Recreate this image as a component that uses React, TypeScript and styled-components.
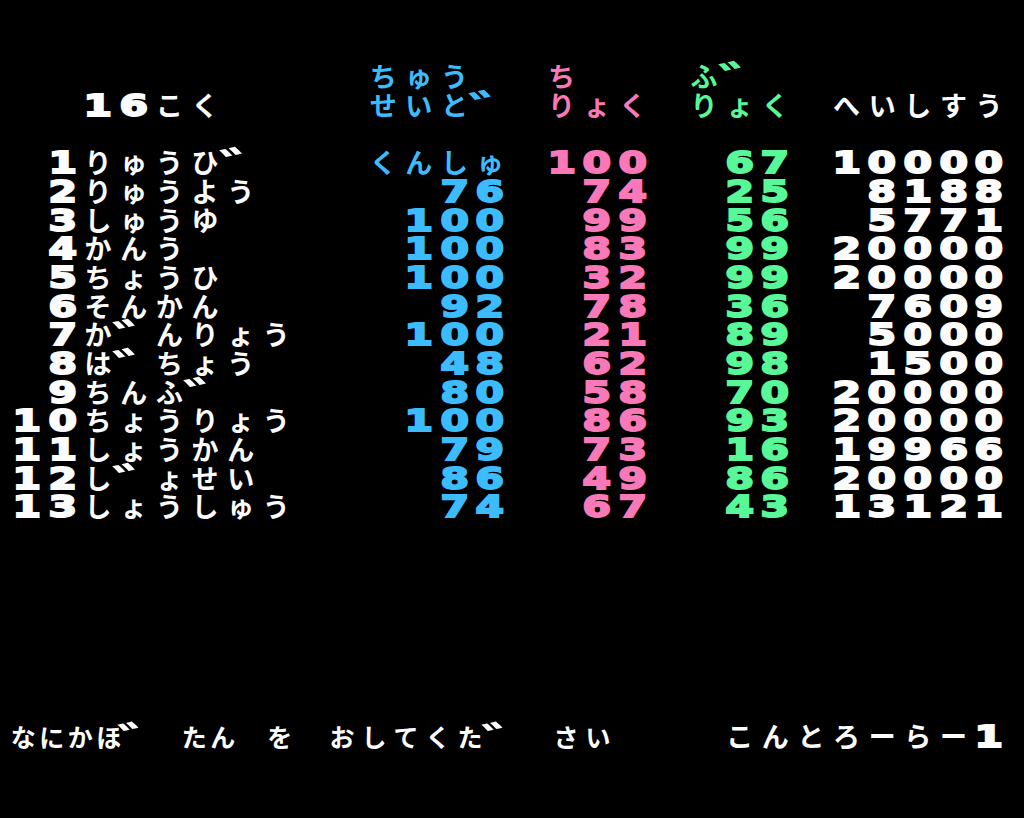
import React from 'react';
import styled, { createGlobalStyle } from 'styled-components';

const CELL = 35.65;
const ROW = 28.67;

const COLORS = {
  white: '#fcfcfc',
  blue: '#3cbcfc',
  pink: '#f878b8',
  green: '#58f898',
};
type Tone = keyof typeof COLORS;

const GlobalStyle = createGlobalStyle`
  html, body { margin: 0; padding: 0; background: #000; }
  #root { width: 1024px; height: 818px; }
`;

const Screen = styled.main`
  width: 1024px;
  height: 818px;
  box-sizing: border-box;
  background: #000;
  padding: 62px 0 0 9px;
  overflow: hidden;
  display: flex;
  flex-direction: column;
`;

const Line = styled.div<{ $gap?: number }>`
  display: grid;
  grid-template-columns: repeat(28, ${CELL}px);
  grid-template-rows: ${ROW}px;
  height: ${ROW}px;
  margin-top: ${(p) => (p.$gap ?? 0) * ROW}px;
  align-items: stretch;
`;

const Segment = styled.span<{ $start: number; $span: number; $tone: Tone }>`
  grid-column: ${(p) => p.$start + 1} / span ${(p) => p.$span};
  grid-row: 1;
  display: flex;
  min-width: 0;
  color: ${(p) => COLORS[p.$tone]};
`;

const Run = styled.span<{ $offset?: number }>`
  display: flex;
  flex: none;
  margin-left: ${(p) => p.$offset ?? 0}px;
`;

const Cell = styled.span<{ $w?: number }>`
  flex: 0 0 ${(p) => p.$w ?? CELL}px;
  width: ${(p) => p.$w ?? CELL}px;
  min-width: 0;
  display: flex;
  align-items: center;
  justify-content: center;
  overflow: visible;
`;

const Digit = styled.span`
  font-family: "DejaVu Sans", sans-serif;
  font-weight: 700;
  font-size: 31px;
  line-height: 22px;
  height: 22px;
  flex: none;
  display: inline-block;
  transform: scaleX(1.32);
  -webkit-text-stroke: 2px currentColor;
`;

const Kana = styled.span<{ $size?: number }>`
  font-family: "Noto Sans CJK JP", "Noto Sans", sans-serif;
  font-weight: 700;
  font-size: ${(p) => p.$size ?? 27}px;
  line-height: 22px;
  height: 22px;
  flex: none;
  display: inline-block;
`;

const Dakuten = styled.span<{ $size?: number }>`
  font-family: "Noto Sans CJK JP", "Noto Sans", sans-serif;
  font-weight: 700;
  font-size: ${(p) => ((p.$size ?? 27) * 40) / 27}px;
  line-height: 22px;
  height: 22px;
  flex: none;
  display: inline-block;
  transform-origin: left center;
  transform: translate(-0.06em, 0.06em) scaleX(1.8);
`;

function Glyph({ ch, size }: { ch: string; size?: number }) {
  if (ch === ' ' || ch === '　') return null;
  if (/[0-9]/.test(ch)) return <Digit>{ch}</Digit>;
  if (ch === '゛') return <Dakuten $size={size}>{ch}</Dakuten>;
  return <Kana $size={size}>{ch}</Kana>;
}

function Cells({ text, w, size }: { text: string; w?: number; size?: number }) {
  return (
    <>
      {Array.from(text).map((ch, i) => (
        <Cell key={i} $w={w}>
          <Glyph ch={ch} size={size} />
        </Cell>
      ))}
    </>
  );
}

function Text({
  text,
  tone,
  start,
  end,
}: {
  text: string;
  tone: Tone;
  start?: number;
  end?: number;
}) {
  const len = Array.from(text).length;
  const s = start ?? (end as number) - len + 1;
  return (
    <Segment $start={s} $span={len} $tone={tone}>
      <Cells text={text} />
    </Segment>
  );
}

type Officer = {
  no: string;
  name: string;
  loyal: string;
  intel: string;
  war: string;
  troops: string;
};

const officers: Officer[] = [
  { no: '1', name: 'りゅうひ゛', loyal: 'くんしゅ', intel: '100', war: '67', troops: '10000' },
  { no: '2', name: 'りゅうよう', loyal: '76', intel: '74', war: '25', troops: '8188' },
  { no: '3', name: 'しゅうゆ', loyal: '100', intel: '99', war: '56', troops: '5771' },
  { no: '4', name: 'かんう', loyal: '100', intel: '83', war: '99', troops: '20000' },
  { no: '5', name: 'ちょうひ', loyal: '100', intel: '32', war: '99', troops: '20000' },
  { no: '6', name: 'そんかん', loyal: '92', intel: '78', war: '36', troops: '7609' },
  { no: '7', name: 'か゛んりょう', loyal: '100', intel: '21', war: '89', troops: '5000' },
  { no: '8', name: 'は゛ちょう', loyal: '48', intel: '62', war: '98', troops: '1500' },
  { no: '9', name: 'ちんふ゛', loyal: '80', intel: '58', war: '70', troops: '20000' },
  { no: '10', name: 'ちょうりょう', loyal: '100', intel: '86', war: '93', troops: '20000' },
  { no: '11', name: 'しょうかん', loyal: '79', intel: '73', war: '16', troops: '19966' },
  { no: '12', name: 'し゛ょせい', loyal: '86', intel: '49', war: '86', troops: '20000' },
  { no: '13', name: 'しょうしゅう', loyal: '74', intel: '67', war: '43', troops: '13121' },
];

const Table = styled.section`
  display: flex;
  flex-direction: column;
  margin-top: ${ROW}px;
`;

export default function App() {
  return (
    <>
      <GlobalStyle />
      <Screen>
        <Line>
          <Text text="ちゅう" tone="blue" start={10} />
          <Text text="ち" tone="pink" start={15} />
          <Text text="ふ゛" tone="green" start={19} />
        </Line>
        <Line>
          <Text text="16こく" tone="white" start={2} />
          <Text text="せいと゛" tone="blue" start={10} />
          <Text text="りょく" tone="pink" start={15} />
          <Text text="りょく" tone="green" start={19} />
          <Text text="へいしすう" tone="white" start={23} />
        </Line>
        <Table>
          {officers.map((o) => (
            <Line key={o.no}>
              <Text text={o.no} tone="white" end={1} />
              <Text text={o.name} tone="white" start={2} />
              {/[0-9]/.test(o.loyal) ? (
                <Text text={o.loyal} tone="blue" end={13} />
              ) : (
                <Text text={o.loyal} tone="blue" start={10} />
              )}
              <Text text={o.intel} tone="pink" end={17} />
              <Text text={o.war} tone="green" end={21} />
              <Text text={o.troops} tone="white" end={27} />
            </Line>
          ))}
        </Table>
        <Line $gap={7}>
          <Segment $start={0} $span={20} $tone="white">
            <Run>
              <Cells text="なにかほ゛　たん　を" w={28.5} size={25} />
            </Run>
            <Run $offset={32}>
              <Cells text="おしてくた゛　さい" w={32} size={25} />
            </Run>
          </Segment>
          <Text text="こんとろーらー1" tone="white" start={20} />
        </Line>
      </Screen>
    </>
  );
}
